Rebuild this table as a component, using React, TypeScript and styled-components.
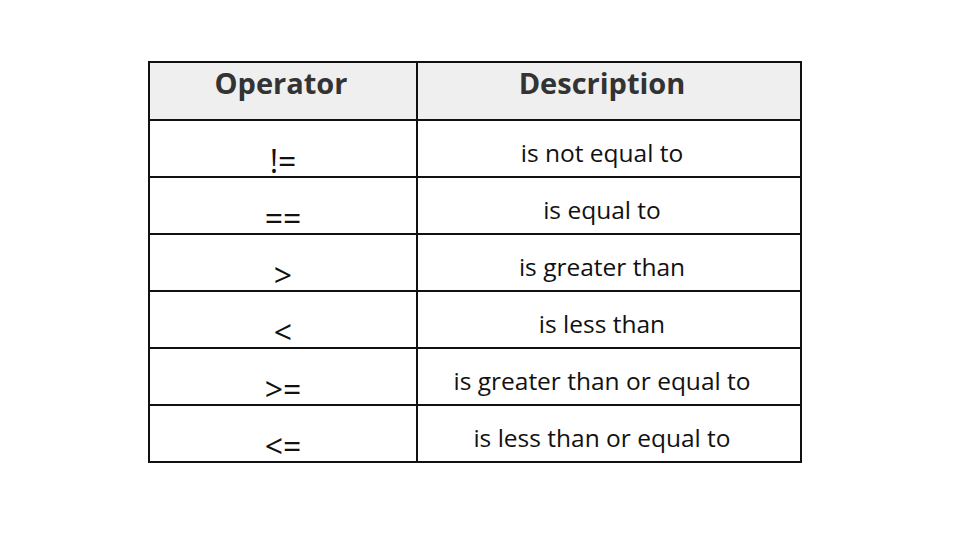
import { createGlobalStyle, styled } from "styled-components";

const GlobalStyle = createGlobalStyle`
  body {
    margin: 0;
    background: #ffffff;
    font-family: "Open Sans", "Liberation Sans", sans-serif;
  }
`;

const Page = styled.div`
  width: 960px;
  height: 540px;
  padding: 61px 0 0 148px;
  box-sizing: border-box;
`;

const Table = styled.table`
  border-collapse: collapse;
  width: 652px;
  table-layout: fixed;
`;

const HeadCell = styled.th<{ $w: number }>`
  width: ${(p) => p.$w}px;
  height: 58px;
  box-sizing: border-box;
  background: #efefef;
  border: 2px solid #111;
  color: #333;
  font-size: 29px;
  font-weight: 700;
  vertical-align: top;
  padding: 0 ${(p) => (p.$w > 300 ? 14 : 4)}px 0 0;
  line-height: 40px;
`;

const Cell = styled.td<{ $op?: boolean }>`
  height: 57px;
  box-sizing: border-box;
  border: 2px solid #111;
  color: #111;
  text-align: center;
  vertical-align: bottom;
  padding: ${(p) => (p.$op ? "0 0 1px 0" : "0 14px 6px 0")};
  font-size: ${(p) => (p.$op ? "32px" : "24.5px")};
  font-weight: ${(p) => (p.$op ? 500 : 400)};
  line-height: ${(p) => (p.$op ? "28px" : "34px")};
`;

const rows = [
  ["!=", "is not equal to"],
  ["==", "is equal to"],
  [">", "is greater than"],
  ["<", "is less than"],
  [">=", "is greater than or equal to"],
  ["<=", "is less than or equal to"],
];

export default function App() {
  return (
    <Page>
      <GlobalStyle />
      <Table>
        <thead>
          <tr>
            <HeadCell $w={268}>Operator</HeadCell>
            <HeadCell $w={384}>Description</HeadCell>
          </tr>
        </thead>
        <tbody>
          {rows.map(([op, desc]) => (
            <tr key={op}>
              <Cell $op>{op}</Cell>
              <Cell>{desc}</Cell>
            </tr>
          ))}
        </tbody>
      </Table>
    </Page>
  );
}
